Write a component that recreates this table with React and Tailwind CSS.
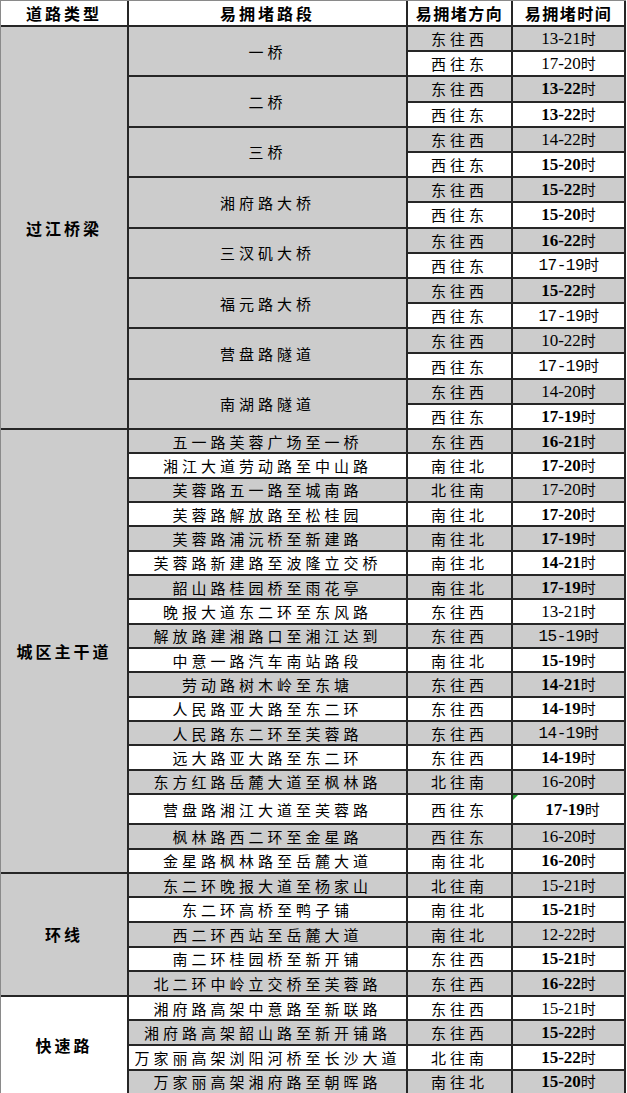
const bridges = [
  { name: '一桥', t1: ['13-21', 'n'], t2: ['17-20', 'n'] },
  { name: '二桥', t1: ['13-22', 'b'], t2: ['13-22', 'b'] },
  { name: '三桥', t1: ['14-22', 'n'], t2: ['15-20', 'b'] },
  { name: '湘府路大桥', t1: ['15-22', 'b'], t2: ['15-20', 'b'] },
  { name: '三汊矶大桥', t1: ['16-22', 'b'], t2: ['17-19', 's'] },
  { name: '福元路大桥', t1: ['15-22', 'b'], t2: ['17-19', 's'] },
  { name: '营盘路隧道', t1: ['10-22', 'n'], t2: ['17-19', 's'] },
  { name: '南湖路隧道', t1: ['14-20', 'n'], t2: ['17-19', 'b'] },
]

const mainRoads = [
  ['五一路芙蓉广场至一桥', '东往西', '16-21', 'b'],
  ['湘江大道劳动路至中山路', '南往北', '17-20', 'b'],
  ['芙蓉路五一路至城南路', '北往南', '17-20', 'n'],
  ['芙蓉路解放路至松桂园', '南往北', '17-20', 'b'],
  ['芙蓉路浦沅桥至新建路', '南往北', '17-19', 'b'],
  ['芙蓉路新建路至波隆立交桥', '南往北', '14-21', 'b'],
  ['韶山路桂园桥至雨花亭', '南往北', '17-19', 'b'],
  ['晚报大道东二环至东风路', '东往西', '13-21', 'n'],
  ['解放路建湘路口至湘江达到', '东往西', '15-19', 's'],
  ['中意一路汽车南站路段', '南往北', '15-19', 'b'],
  ['劳动路树木岭至东塘', '东往西', '14-21', 'b'],
  ['人民路亚大路至东二环', '东往西', '14-19', 'b'],
  ['人民路东二环至芙蓉路', '东往西', '14-19', 's'],
  ['远大路亚大路至东二环', '东往西', '14-19', 'b'],
  ['东方红路岳麓大道至枫林路', '北往南', '16-20', 'n'],
  ['营盘路湘江大道至芙蓉路', '西往东', '17-19', 'b', true],
  ['枫林路西二环至金星路', '西往东', '16-20', 'n'],
  ['金星路枫林路至岳麓大道', '南往北', '16-20', 'b'],
]

const ringRoads = [
  ['东二环晚报大道至杨家山', '北往南', '15-21', 'n'],
  ['东二环高桥至鸭子铺', '南往北', '15-21', 'b'],
  ['西二环西站至岳麓大道', '南往北', '12-22', 'n'],
  ['南二环桂园桥至新开铺', '东往西', '15-21', 'b'],
  ['北二环中岭立交桥至芙蓉路', '东往西', '16-22', 'b'],
]

const expressRoads = [
  ['湘府路高架中意路至新联路', '东往西', '15-21', 'n'],
  ['湘府路高架韶山路至新开铺路', '东往西', '15-22', 'b'],
  ['万家丽高架浏阳河桥至长沙大道', '北往南', '15-22', 'b'],
  ['万家丽高架湘府路至朝晖路', '南往北', '15-20', 'b'],
]

const cell = 'flex items-center justify-center border-r-2 border-b-2 border-[#262626] text-black'
const gray = 'bg-[#cccccc]'
const white = 'bg-white'

function Time({ value, style, gray: isGray, note }) {
  const face =
    style === 'b'
      ? "font-['Liberation_Serif','Noto_Sans_CJK_SC',serif] text-[17px] font-bold"
      : style === 'n'
        ? "font-['Liberation_Serif','Noto_Sans_CJK_SC',serif] text-[17px]"
        : "font-['Liberation_Mono','Noto_Sans_CJK_SC',monospace] text-[16px] tracking-[-0.5px]"
  return (
    <div className={`relative ${cell} ${isGray ? gray : white}`}>
      {note && (
        <span className="absolute left-0 top-0 h-0 w-0 border-r-[5px] border-t-[5px] border-r-transparent border-t-[#1f9d2e]" />
      )}
      <span className={`${face} ${note ? 'pl-2' : ''}`}>
        {value}
        <span className="font-['Noto_Sans_CJK_SC',sans-serif] text-[15px] font-normal">时</span>
      </span>
    </div>
  )
}

const zh = "font-['Noto_Sans_CJK_SC',sans-serif] text-[15px] tracking-[4px]"
const head = "font-['Noto_Sans_CJK_SC',sans-serif] text-[16px] font-bold tracking-[3px]"

function RoadRows({ rows, grayFirst }) {
  return rows.map(([seg, dir, t, s, note], i) => {
    const isGray = grayFirst ? i % 2 === 0 : i % 2 === 1
    const bg = isGray ? gray : white
    return [
      <div key={seg} className={`${cell} ${bg}`}>
        <span className={zh}>{seg}</span>
      </div>,
      <div key={seg + 'd'} className={`${cell} ${bg}`}>
        <span className={zh}>{dir}</span>
      </div>,
      <Time key={seg + 't'} value={t} style={s} gray={isGray} note={note} />,
    ]
  })
}

export default function App() {
  return (
    <div className="min-h-screen bg-white">
      <div className="grid w-[626px] grid-cols-[128px_279px_105px_113px] grid-rows-[26px_repeat(16,25.19px)_repeat(15,24.35px)_30px_repeat(2,24.35px)_repeat(9,24.6px)] border-l border-t border-[#8a8a8a] leading-none">
        <div className={`${cell} ${white}`}><span className={head}>道路类型</span></div>
        <div className={`${cell} ${white}`}><span className={head}>易拥堵路段</span></div>
        <div className={`${cell} ${white}`}><span className="font-['Noto_Sans_CJK_SC',sans-serif] text-[16px] font-bold tracking-[1.5px]">易拥堵方向</span></div>
        <div className={`${cell} ${white}`}><span className="font-['Noto_Sans_CJK_SC',sans-serif] text-[16px] font-bold tracking-[1.5px]">易拥堵时间</span></div>

        <div className={`${cell} ${gray} row-span-16`}><span className={head}>过江桥梁</span></div>
        {bridges.map((b) => [
          <div key={b.name} className={`${cell} ${gray} row-span-2`}>
            <span className={zh}>{b.name}</span>
          </div>,
          <div key={b.name + 'd1'} className={`${cell} ${gray}`}><span className={zh}>东往西</span></div>,
          <Time key={b.name + 't1'} value={b.t1[0]} style={b.t1[1]} gray />,
          <div key={b.name + 'd2'} className={`${cell} ${white}`}><span className={zh}>西往东</span></div>,
          <Time key={b.name + 't2'} value={b.t2[0]} style={b.t2[1]} />,
        ])}

        <div className={`${cell} ${gray} row-span-18`}><span className={head}>城区主干道</span></div>
        <RoadRows rows={mainRoads} grayFirst />

        <div className={`${cell} ${gray} row-span-5`}><span className={head}>环线</span></div>
        <RoadRows rows={ringRoads} grayFirst />

        <div className={`${cell} ${white} row-span-4`}><span className={head}>快速路</span></div>
        <RoadRows rows={expressRoads} grayFirst={false} />
      </div>
    </div>
  )
}
